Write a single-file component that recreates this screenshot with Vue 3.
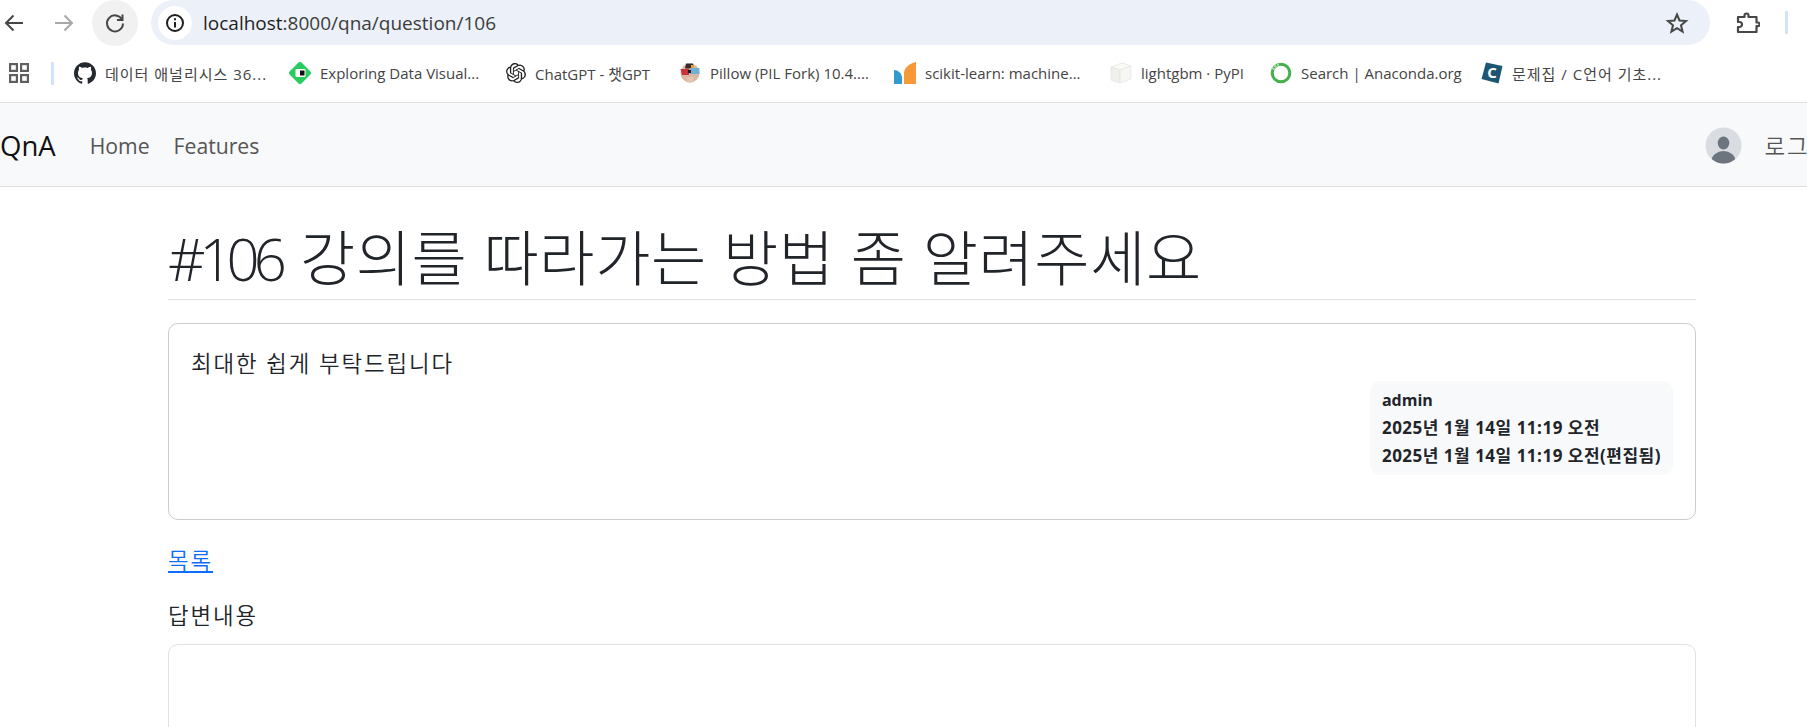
<script setup>
const bookmarks = [
  { icon: 'github', label: '데이터 애널리시스 36...', width: 215, hangul: true },
  { icon: 'diamond', label: 'Exploring Data Visual...', width: 217 },
  { icon: 'openai', label: 'ChatGPT - 챗GPT', width: 173 },
  { icon: 'pillow', label: 'Pillow (PIL Fork) 10.4....', width: 215 },
  { icon: 'sklearn', label: 'scikit-learn: machine...', width: 216 },
  { icon: 'cube', label: 'lightgbm · PyPI', width: 160 },
  { icon: 'ring', label: 'Search | Anaconda.org', width: 211 },
  { icon: 'cbook', label: '문제집 / C언어 기초...', width: 200, hangul: true },
]
</script>

<template>
  <div class="page">
    <header class="toolbar">
      <button class="tool back">
        <svg width="22" height="22" viewBox="0 0 22 22" fill="none" stroke="#474747" stroke-width="2">
          <path d="M20 11H3M10.500 3.500 3 11l7.500 7.500" />
        </svg>
      </button>
      <button class="tool forward">
        <svg width="22" height="22" viewBox="0 0 22 22" fill="none" stroke="#a8a8a8" stroke-width="2">
          <path d="M2 11h17M11.500 3.500 19 11l-7.500 7.500" />
        </svg>
      </button>
      <button class="tool reload">
        <svg width="22" height="22" viewBox="0 0 22 22" fill="none" stroke="#474747" stroke-width="2">
          <path d="M18 7.500A8 8 0 1 0 19 11.500" />
          <path d="M18.500 2.500v5.500H13" />
        </svg>
      </button>
      <div class="omnibox">
        <span class="site-info">
          <svg width="20" height="20" viewBox="0 0 20 20" fill="none" stroke="#1f1f1f" stroke-width="2">
            <circle cx="10" cy="10" r="8" />
            <path d="M10 9v5.500M10 5.200v2" />
          </svg>
        </span>
        <span class="url"><b>localhost</b>:8000/qna/question/106</span>
        <svg class="star" width="24" height="24" viewBox="0 0 24 24" fill="none" stroke="#474747" stroke-width="2" stroke-linejoin="miter">
          <path d="m12 3.500 2.500 6 6.500.5-5 4.300 1.600 6.400L12 17.200l-5.600 3.500L8 14.300 3 10l6.500-.5z" />
        </svg>
      </div>
      <svg class="puzzle" width="24" height="24" viewBox="0 0 24 24" fill="none" stroke="#474747" stroke-width="2.200" stroke-linejoin="round">
        <path d="M2 6h6.500V4.500a2 2 0 0 1 4 0V6h8v5.500h1.300a1.800 1.800 0 0 1 0 3.600H20.500V21H2v-5h1.500a2.500 2.500 0 0 0 0-5H2z" />
      </svg>
      <span class="divider"></span>
    </header>

    <nav class="bookmarks">
      <svg class="apps" width="20" height="20" viewBox="0 0 20 20" fill="none" stroke="#5f5f5f" stroke-width="2.200">
        <rect x="1.100" y="1.100" width="6.800" height="6.800" />
        <rect x="12.100" y="1.100" width="6.800" height="6.800" />
        <rect x="1.100" y="12.100" width="6.800" height="6.800" />
        <rect x="12.100" y="12.100" width="6.800" height="6.800" />
      </svg>
      <span class="bar-sep"></span>
      <a v-for="item in bookmarks" :key="item.label" class="bookmark" :style="{ width: item.width + 'px' }">
        <svg v-if="item.icon === 'github'" width="22" height="22" viewBox="0 0 24 24" fill="#24292f">
          <path d="M12 .297c-6.630 0-12 5.373-12 12 0 5.303 3.438 9.800 8.205 11.385.6.113.82-.258.82-.577 0-.285-.01-1.040-.015-2.040-3.338.724-4.042-1.610-4.042-1.610C4.422 18.070 3.633 17.700 3.633 17.700c-1.087-.744.084-.729.084-.729 1.205.084 1.838 1.236 1.838 1.236 1.070 1.835 2.809 1.305 3.495.998.108-.776.417-1.305.76-1.605-2.665-.3-5.466-1.332-5.466-5.930 0-1.310.465-2.380 1.235-3.220-.135-.303-.54-1.523.105-3.176 0 0 1.005-.322 3.300 1.230.96-.267 1.980-.399 3-.405 1.020.006 2.040.138 3 .405 2.280-1.552 3.285-1.230 3.285-1.230.645 1.653.24 2.873.12 3.176.765.84 1.230 1.910 1.230 3.220 0 4.610-2.805 5.625-5.475 5.920.42.36.81 1.096.81 2.220 0 1.606-.015 2.896-.015 3.286 0 .315.21.69.825.57C20.565 22.092 24 17.592 24 12.297c0-6.627-5.373-12-12-12" />
        </svg>
        <svg v-else-if="item.icon === 'diamond'" width="22" height="22" viewBox="0 0 22 22">
          <path d="M9.500 .6a2.200 2.200 0 0 1 3 0l8.900 8.900a2.200 2.200 0 0 1 0 3l-8.900 8.900a2.200 2.200 0 0 1-3 0L.6 12.500a2.200 2.200 0 0 1 0-3z" fill="#2bcc5f" />
          <rect x="6.500" y="7" width="10" height="8" rx="1" fill="#fff" />
          <rect x="11" y="8.500" width="4.500" height="5" fill="#111" />
        </svg>
        <svg v-else-if="item.icon === 'openai'" width="20" height="20" viewBox="0 0 24 24" fill="#222">
          <path d="M22.282 9.821a5.985 5.985 0 0 0-.516-4.911 6.046 6.046 0 0 0-6.510-2.900A6.065 6.065 0 0 0 4.981 4.182a5.985 5.985 0 0 0-3.998 2.900 6.046 6.046 0 0 0 .743 7.097 5.980 5.980 0 0 0 .511 4.911 6.051 6.051 0 0 0 6.515 2.900A5.985 5.985 0 0 0 13.260 24a6.056 6.056 0 0 0 5.772-4.206 5.989 5.989 0 0 0 3.998-2.900 6.056 6.056 0 0 0-.748-7.073zM13.260 22.429a4.476 4.476 0 0 1-2.876-1.041l.142-.08 4.778-2.758a.795.795 0 0 0 .393-.682v-6.737l2.020 1.169a.071.071 0 0 1 .038.052v5.583a4.504 4.504 0 0 1-4.495 4.494zM3.600 18.304a4.471 4.471 0 0 1-.535-3.014l.142.085 4.783 2.758a.771.771 0 0 0 .781 0l5.843-3.368v2.332a.08.08 0 0 1-.033.062L9.740 19.950a4.499 4.499 0 0 1-6.141-1.646zM2.341 7.896a4.485 4.485 0 0 1 2.365-1.973V11.600a.766.766 0 0 0 .388.677l5.814 3.354-2.020 1.169a.076.076 0 0 1-.071 0l-4.830-2.787A4.504 4.504 0 0 1 2.340 7.872zm16.596 3.855L13.104 8.364 15.119 7.200a.076.076 0 0 1 .071 0l4.830 2.791a4.494 4.494 0 0 1-.676 8.105v-5.678a.79.79 0 0 0-.407-.667zm2.011-3.023l-.142-.085-4.774-2.782a.776.776 0 0 0-.785 0L9.409 9.230V6.897a.066.066 0 0 1 .028-.061l4.830-2.787a4.499 4.499 0 0 1 6.680 4.660zM8.307 12.863l-2.020-1.164a.08.08 0 0 1-.038-.057V6.074a4.499 4.499 0 0 1 7.376-3.454l-.142.081L8.704 5.459a.795.795 0 0 0-.393.681zm1.097-2.365l2.602-1.500 2.607 1.500v2.999l-2.597 1.500-2.607-1.500z" />
        </svg>
        <svg v-else-if="item.icon === 'pillow'" width="22" height="22" viewBox="0 0 22 22">
          <circle cx="11" cy="11" r="9.500" fill="#d9b8a4" />
          <path d="M7 1.500h7l1 5H6z" fill="#3a2a2a" />
          <path d="M1.500 7H10v6H3z" fill="#c8323a" />
          <path d="M11 6h9.500v6H11z" fill="#6fb0d8" />
          <path d="M9 8h3v3H9z" fill="#1d1d1d" />
          <path d="M12 3h3v3h-3z" fill="#e2a52e" />
          <path d="M7 15h8l-2 5.500H9z" fill="#e3c5b2" />
        </svg>
        <svg v-else-if="item.icon === 'sklearn'" width="22" height="22" viewBox="0 0 22 22">
          <path d="M0 8c4 0 8 3 8 8v6H0z" fill="#3499cd" />
          <path d="M10 22V11c0-5 6-10 12-11v22z" fill="#f89939" />
        </svg>
        <svg v-else-if="item.icon === 'cube'" width="22" height="22" viewBox="0 0 22 22" stroke="#e6e6e2" stroke-width=".8">
          <path d="M1 5 12 1l9 3-11 4z" fill="#fafaf8" />
          <path d="M1 5l9 3v13l-9-3z" fill="#efefeb" />
          <path d="M10 8l11-4v13l-11 4z" fill="#f6f6f3" />
        </svg>
        <svg v-else-if="item.icon === 'ring'" width="22" height="22" viewBox="0 0 22 22" fill="none">
          <circle cx="11" cy="11" r="8.800" stroke="#43b049" stroke-width="3" />
          <path d="M3 7.500A9 9 0 0 1 9 2.300" stroke="#a6dba9" stroke-width="3" stroke-dasharray="2 1" />
        </svg>
        <svg v-else width="22" height="22" viewBox="0 0 22 22">
          <path d="M5 .5 21.500 4 17.500 21.500 .5 17z" fill="#1d5673" />
          <text x="11" y="16" text-anchor="middle" class="c-mark">C</text>
        </svg>
        <span class="bookmark-label" :class="{ hangul: item.hangul }">{{ item.label }}</span>
      </a>
    </nav>

    <nav class="navbar">
      <a class="brand">QnA</a>
      <a class="nav-link">Home</a>
      <a class="nav-link">Features</a>
      <div class="user">
        <svg class="avatar" width="37" height="37" viewBox="0 0 37 37">
          <defs>
            <clipPath id="avatar-clip"><circle cx="18.500" cy="18.500" r="18" /></clipPath>
          </defs>
          <circle cx="18.500" cy="18.500" r="18" fill="#d9dce0" />
          <g clip-path="url(#avatar-clip)" fill="#6c757d">
            <ellipse cx="18.500" cy="16" rx="5.800" ry="6.500" />
            <ellipse cx="18.500" cy="34" rx="12" ry="10" />
          </g>
        </svg>
        <span class="login">로그인</span>
      </div>
    </nav>

    <main class="content">
      <h1 class="title"><span class="title-no">#106</span> 강의를 따라가는 방법 좀 알려주세요</h1>

      <section class="card question">
        <p class="question-body">최대한 쉽게 부탁드립니다</p>
        <div class="meta">
          <div class="meta-name">admin</div>
          <div>2025년 1월 14일 11:19 오전</div>
          <div>2025년 1월 14일 11:19 오전(편집됨)</div>
        </div>
      </section>

      <a class="back-link">목록</a>

      <h2 class="answers-title">답변내용</h2>
      <section class="card answers"></section>
    </main>
  </div>
</template>

<style scoped>
.page {
  width: 1807px;
  height: 727px;
  overflow: hidden;
  background: #fff;
  color: #212529;
  font-family: "Open Sans", "Noto Sans CJK KR", sans-serif;
}

.toolbar {
  display: flex;
  align-items: center;
  height: 45px;
  margin-bottom: 1px;
}

.tool {
  display: flex;
  flex-shrink: 0;
  align-items: center;
  justify-content: center;
  width: 46px;
  height: 46px;
  padding: 0;
  border: 0;
  border-radius: 50%;
  background: none;
}

.back {
  margin-left: -9px;
}

.forward {
  margin-left: 4px;
}

.reload {
  margin-left: 5px;
  background: #f1f1f1;
}

.omnibox {
  display: flex;
  flex-shrink: 0;
  align-items: center;
  box-sizing: border-box;
  width: 1559px;
  height: 45px;
  margin-left: 13px;
  padding-left: 7px;
  border-radius: 23px;
  background: #ebf0f9;
}

.site-info {
  display: flex;
  align-items: center;
  justify-content: center;
  width: 34px;
  height: 34px;
  border-radius: 50%;
  background: #fff;
}

.url {
  margin-left: 11px;
  color: #3c3c3c;
  font-family: "Open Sans", sans-serif;
  font-size: 19px;
}

.url b {
  color: #1f1f1f;
  font-weight: 400;
}

.star {
  margin-left: auto;
  margin-right: 21px;
}

.puzzle {
  flex-shrink: 0;
  margin-left: 26px;
}

.divider {
  flex-shrink: 0;
  width: 3px;
  height: 23px;
  margin-left: 25px;
  background: #d3e3fd;
}

.bookmarks {
  display: flex;
  align-items: center;
  box-sizing: border-box;
  height: 57px;
  padding-bottom: 2px;
  padding-left: 9px;
  border-bottom: 1px solid #e0e0e0;
}

.apps {
  flex-shrink: 0;
}

.bar-sep {
  flex-shrink: 0;
  width: 3px;
  height: 23px;
  margin-left: 22px;
  margin-right: 20px;
  background: #d3e3fd;
}

.bookmark {
  display: flex;
  flex-shrink: 0;
  align-items: center;
  gap: 9px;
  box-sizing: border-box;
  color: #444;
  font-size: 15px;
  white-space: nowrap;
}

.bookmark svg {
  flex-shrink: 0;
}

.bookmark-label.hangul {
  letter-spacing: 1px;
}

.c-mark {
  fill: #fff;
  font-family: "Open Sans", sans-serif;
  font-size: 15px;
  font-weight: 700;
}

.navbar {
  display: flex;
  align-items: center;
  box-sizing: border-box;
  height: 84px;
  padding-top: 2px;
  border-bottom: 1px solid #dfe1e3;
  background: #f8f9fa;
}

.brand {
  margin-right: 34px;
  color: #111;
  font-size: 27.500px;
}

.nav-link {
  margin-right: 24px;
  color: #555;
  font-size: 21.200px;
}

.user {
  display: flex;
  flex-shrink: 0;
  align-items: center;
  gap: 23px;
  margin-left: auto;
  margin-right: -25px;
}

.login {
  color: #555;
  font-size: 22.400px;
  font-weight: 350;
  letter-spacing: 1.900px;
  white-space: nowrap;
}

.content {
  width: 1528px;
  margin-left: 168px;
}

.title {
  height: 80px;
  margin: 0 0 23px;
  padding: 32px 0 0;
  border-bottom: 1px solid #dee2e6;
  font-size: 60px;
  font-weight: 300;
  letter-spacing: .6px;
  line-height: 78px;
  white-space: nowrap;
}

.title-no {
  margin-right: 3px;
  font-size: 58px;
  font-weight: 300;
  letter-spacing: -6px;
}

.card {
  box-sizing: border-box;
  border: 1px solid #ccc;
  border-radius: 10px;
  background: #fff;
}

.question {
  display: flex;
  flex-direction: column;
  height: 197px;
  padding: 24px 22px 22px;
}

.question-body {
  margin: 0;
  font-size: 22.400px;
  font-weight: 350;
  letter-spacing: 1.900px;
  line-height: 32px;
}

.meta {
  align-self: flex-end;
  margin-top: 1px;
  padding: 5px 12px;
  border-radius: 10px;
  background: #f8f9fa;
  font-size: 17px;
  font-weight: 700;
  letter-spacing: .5px;
  line-height: 28px;
}

.meta-name {
  font-size: 16px;
  letter-spacing: 0;
}

.back-link {
  display: inline-block;
  margin-top: 24px;
  color: #0d6efd;
  font-size: 22.400px;
  font-weight: 350;
  letter-spacing: 1.900px;
  line-height: 34px;
  text-decoration: underline;
}

.answers-title {
  margin: 21px 0 11px;
  font-size: 22.400px;
  font-weight: 350;
  letter-spacing: 1.900px;
  line-height: 34px;
}

.answers {
  height: 200px;
  border-color: #dee2e6;
}
</style>
